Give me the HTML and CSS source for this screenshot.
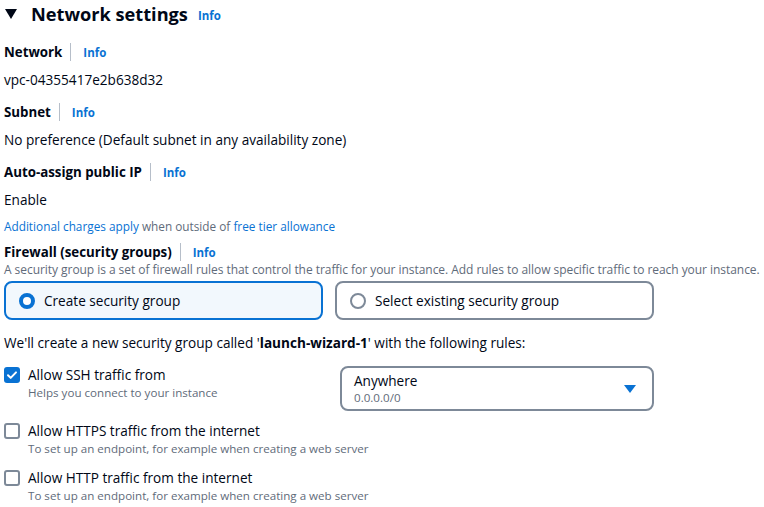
FILE: index.html
```html
<!DOCTYPE html>
<html>
<head>
<meta charset="utf-8">
<link rel="stylesheet" href="styles.css">
</head>
<body>
<div class="panel">
  <div class="header">
    <svg class="caret" width="12" height="10" viewBox="0 0 12 10"><path d="M0 0h12L6 10z" fill="#000716"/></svg>
    <h2>Network settings</h2>
    <a class="info">Info</a>
  </div>

  <div class="field">
    <div class="label"><span>Network</span><span class="sep"></span><a class="info">Info</a></div>
    <div class="value">vpc-04355417e2b638d32</div>
  </div>
  <div class="field">
    <div class="label"><span>Subnet</span><span class="sep"></span><a class="info">Info</a></div>
    <div class="value">No preference (Default subnet in any availability zone)</div>
  </div>
  <div class="field">
    <div class="label"><span>Auto-assign public IP</span><span class="sep"></span><a class="info">Info</a></div>
    <div class="value">Enable</div>
  </div>
  <div class="note"><a>Additional charges apply</a> when outside of <a>free tier allowance</a></div>

  <div class="fw">
    <div class="label"><span>Firewall (security groups)</span><span class="sep"></span><a class="info">Info</a></div>
    <div class="desc">A security group is a set of firewall rules that control the traffic for your instance. Add rules to allow specific traffic to reach your instance.</div>
  </div>
  <div class="tiles">
    <div class="tile selected"><span class="radio on"></span>Create security group</div>
    <div class="tile"><span class="radio"></span>Select existing security group</div>
  </div>

  <div class="intro">We'll create a new security group called '<b>launch-wizard-1</b>' with the following rules:</div>

  <div class="rule ssh">
    <div class="check">
      <span class="box on"><svg width="16" height="16" viewBox="0 0 16 16"><path d="M4 8.2l2.7 2.7L12 5.4" fill="none" stroke="#fff" stroke-width="2" stroke-linecap="round" stroke-linejoin="round"/></svg></span>
      <div><div class="rl">Allow SSH traffic from</div><div class="rs">Helps you connect to your instance</div></div>
    </div>
    <div class="select">
      <div><div class="sv">Anywhere</div><div class="ss">0.0.0.0/0</div></div>
      <svg width="12" height="8" viewBox="0 0 12 8"><path d="M0 0h12L6 8z" fill="#0972d3"/></svg>
    </div>
  </div>
  <div class="rule https">
    <div class="check">
      <span class="box"></span>
      <div><div class="rl">Allow HTTPS traffic from the internet</div><div class="rs">To set up an endpoint, for example when creating a web server</div></div>
    </div>
  </div>
  <div class="rule http">
    <div class="check">
      <span class="box"></span>
      <div><div class="rl">Allow HTTP traffic from the internet</div><div class="rs">To set up an endpoint, for example when creating a web server</div></div>
    </div>
  </div>
</div>
</body>
</html>
```
FILE: styles.css
```css
* { box-sizing: border-box; }
body {
  margin: 0;
  background: #fff;
  color: #000716;
  font-family: "Open Sans", "Noto Sans", sans-serif;
  font-size: 13.6px;
}
.panel { padding: 0 4px; }
.header {
  display: flex;
  align-items: center;
  height: 28px;
}
.caret { margin: 0 14px 0 1px; }
.header h2 {
  margin: 0;
  font-size: 18.2px;
  font-weight: 700;
}
.header .info { margin-left: 10px; margin-top: 3px; }
.info {
  color: #0972d3;
  font-size: 11.5px;
  font-weight: 700;
}
.field { margin-top: 14px; }
.field + .field { margin-top: 12px; }
.label {
  display: flex;
  align-items: center;
  font-weight: 700;
  font-size: 13.3px;
  height: 20px;
}
.sep {
  width: 1px;
  height: 18px;
  background: #b6bec9;
  margin: 0 12px 0 8px;
}
.value { margin-top: 8px; line-height: 20px; }
.note {
  margin-top: 8px;
  font-size: 11.8px;
  color: #5f6b7a;
  line-height: 16px;
}
.note a { color: #0972d3; }
.fw { margin-top: 8px; }
.desc {
  font-size: 12px;
  color: #5f6b7a;
  line-height: 15px;
  white-space: nowrap;
  letter-spacing: -0.05px;
}
.tiles {
  display: flex;
  gap: 12px;
  margin-top: 4px;
}
.tile {
  width: 319px;
  height: 39px;
  border: 2px solid #7d8998;
  border-radius: 8px;
  display: flex;
  align-items: center;
  padding-left: 13px;
}
.tile.selected {
  border-color: #0972d3;
  background: #f2f8fd;
}
.radio {
  width: 16px;
  height: 16px;
  border-radius: 50%;
  border: 2px solid #7d8998;
  margin-right: 9px;
  flex: none;
}
.radio.on { border: 4px solid #0972d3; background: #fff; }
.intro { margin-top: 13px; line-height: 20px; }
.rule { display: flex; align-items: flex-start; }
.ssh { margin-top: 12px; }
.https { margin-top: 10px; }
.http { margin-top: 11px; }
.check { display: flex; align-items: flex-start; min-width: 336px; }
.box {
  width: 16px;
  height: 16px;
  border: 2px solid #7d8998;
  border-radius: 3px;
  margin: 2px 8px 0 0;
  flex: none;
  display: flex;
}
.box.on { border: none; background: #0972d3; }
.rl { line-height: 20px; }
.rs { font-size: 11.6px; color: #5f6b7a; line-height: 16px; }
.select {
  width: 314px;
  height: 45px;
  border: 2px solid #7d8998;
  border-radius: 8px;
  display: flex;
  align-items: center;
  justify-content: space-between;
  padding: 0 16px 0 12px;
  margin-top: 1px;
}
.sv { line-height: 18px; }
.ss { font-size: 11.6px; color: #5f6b7a; line-height: 16px; }
```
